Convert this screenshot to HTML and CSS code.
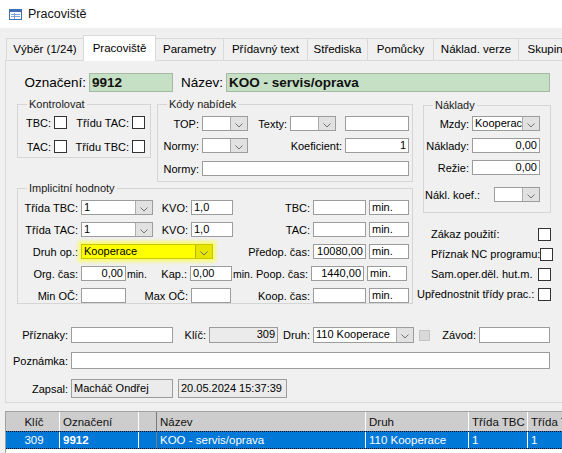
FILE: index.html
```html
<!DOCTYPE html>
<html>
<head>
<meta charset="utf-8">
<link rel="stylesheet" href="styles.css">
</head>
<body>
<div class="titlebar">
    <svg class="ticon" width="13" height="11" viewBox="0 0 13 11">
        <rect x="0.5" y="0.5" width="12" height="10" fill="#fff" stroke="#3f6fb5"/>
        <rect x="1" y="1" width="11" height="2" fill="#3f6fb5"/>
        <line x1="2" y1="5.5" x2="11" y2="5.5" stroke="#7fa2d6"/>
        <line x1="2" y1="7.5" x2="11" y2="7.5" stroke="#7fa2d6"/>
        <line x1="5.5" y1="4" x2="5.5" y2="10" stroke="#7fa2d6"/>
    </svg>
    <span>Pracoviště</span>
</div>

<div class="tabs">
    <div class="tab t1">Výběr (1/24)</div>
    <div class="tab t2 on">Pracoviště</div>
    <div class="tab t3">Parametry</div>
    <div class="tab t4">Přídavný text</div>
    <div class="tab t5">Střediska</div>
    <div class="tab t6">Pomůcky</div>
    <div class="tab t7">Náklad. verze</div>
    <div class="tab t8">Skupiny</div>
</div>

<div class="page">
    <div class="orow">
        <span class="l w83">Označení:</span>
        <div class="tb green w84">9912</div>
        <span class="l w53">Název:</span>
        <div class="tb green w324">KOO - servis/oprava</div>
    </div>

    <div class="main">
        <div class="leftcol">
            <div class="toprow">
                <div class="grp kontrol">
                    <div class="gt">Kontrolovat</div>
                    <div class="gr">
                        <span class="l w36">TBC:</span><div class="ck"></div>
                        <span class="l w65">Třídu TAC:</span><div class="ck"></div>
                    </div>
                    <div class="gr">
                        <span class="l w36">TAC:</span><div class="ck"></div>
                        <span class="l w65">Třídu TBC:</span><div class="ck"></div>
                    </div>
                </div>

                <div class="grp kody">
                    <div class="gt">Kódy nabídek</div>
                    <div class="gr">
                        <span class="l w44">TOP:</span>
                        <div class="cmb w46"><span class="cv"></span><span class="ca"><svg width="8" height="5"><polyline points="0.5,0.5 4,4 7.5,0.5" fill="none" stroke="#707070"/></svg></span></div>
                        <span class="l w42">Texty:</span>
                        <div class="cmb w46"><span class="cv"></span><span class="ca"><svg width="8" height="5"><polyline points="0.5,0.5 4,4 7.5,0.5" fill="none" stroke="#707070"/></svg></span></div>
                        <div class="tb w64 ml9"></div>
                    </div>
                    <div class="gr">
                        <span class="l w44">Normy:</span>
                        <div class="cmb w46"><span class="cv"></span><span class="ca"><svg width="8" height="5"><polyline points="0.5,0.5 4,4 7.5,0.5" fill="none" stroke="#707070"/></svg></span></div>
                        <span class="l w97">Koeficient:</span>
                        <div class="tb w64 r">1</div>
                    </div>
                    <div class="gr">
                        <span class="l w44">Normy:</span>
                        <div class="tb w207"></div>
                    </div>
                </div>
            </div>

            <div class="grp implicit">
                <div class="gt">Implicitní hodnoty</div>
                <div class="gr">
                    <span class="l w63">Třída TBC:</span>
                    <div class="cmb w72"><span class="cv">1</span><span class="ca"><svg width="8" height="5"><polyline points="0.5,0.5 4,4 7.5,0.5" fill="none" stroke="#707070"/></svg></span></div>
                    <span class="l w38">KVO:</span>
                    <div class="tb w42">1,0</div>
                    <span class="l w80">TBC:</span>
                    <div class="tb w53"></div>
                    <div class="tb w40 ml3">min.</div>
                </div>
                <div class="gr">
                    <span class="l w63">Třída TAC:</span>
                    <div class="cmb w72"><span class="cv">1</span><span class="ca"><svg width="8" height="5"><polyline points="0.5,0.5 4,4 7.5,0.5" fill="none" stroke="#707070"/></svg></span></div>
                    <span class="l w38">KVO:</span>
                    <div class="tb w42">1,0</div>
                    <span class="l w80">TAC:</span>
                    <div class="tb w53"></div>
                    <div class="tb w40 ml3">min.</div>
                </div>
                <div class="gr">
                    <span class="l w63">Druh op.:</span>
                    <div class="cmb hl w132"><span class="cv">Kooperace</span><span class="ca"><svg width="8" height="5"><polyline points="0.5,0.5 4,4 7.5,0.5" fill="none" stroke="#707070"/></svg></span></div>
                    <span class="l w100">Předop. čas:</span>
                    <div class="tb w53 r">10080,00</div>
                    <div class="tb w40 ml3">min.</div>
                </div>
                <div class="gr">
                    <span class="l w63">Org. čas:</span>
                    <div class="tb w45 r">0,00</div>
                    <span class="unit">min.</span>
                    <span class="l w42">Kap.:</span>
                    <div class="tb w42">0,00</div>
                    <span class="unit">min.</span>
                    <span class="l w57">Poop. čas:</span>
                    <div class="tb w53 r">1440,00</div>
                    <div class="tb w40 ml3">min.</div>
                </div>
                <div class="gr">
                    <span class="l w63">Min OČ:</span>
                    <div class="tb w45"></div>
                    <span class="l w65">Max OČ:</span>
                    <div class="tb w40"></div>
                    <span class="l w82">Koop. čas:</span>
                    <div class="tb w53"></div>
                    <div class="tb w40 ml3">min.</div>
                </div>
            </div>
        </div>

        <div class="rightcol">
            <div class="grp naklady">
                <div class="gt">Náklady</div>
                <div class="gr">
                    <span class="l w48">Mzdy:</span>
                    <div class="cmb w68"><span class="cv">Kooperace</span><span class="ca"><svg width="8" height="5"><polyline points="0.5,0.5 4,4 7.5,0.5" fill="none" stroke="#707070"/></svg></span></div>
                </div>
                <div class="gr">
                    <span class="l w48">Náklady:</span>
                    <div class="tb w68 r">0,00</div>
                </div>
                <div class="gr">
                    <span class="l w48">Režie:</span>
                    <div class="tb w68 r">0,00</div>
                </div>
                <div class="gr">
                    <span class="l left w70">Nákl. koef.:</span>
                    <div class="cmb w46"><span class="cv"></span><span class="ca"><svg width="8" height="5"><polyline points="0.5,0.5 4,4 7.5,0.5" fill="none" stroke="#707070"/></svg></span></div>
                </div>
            </div>

            <div class="checks">
                <div class="chk"><span>Zákaz použití:</span><div class="ck"></div></div>
                <div class="chk"><span>Příznak NC programu:</span><div class="ck"></div></div>
                <div class="chk"><span>Sam.oper.děl. hut.m.</span><div class="ck"></div></div>
                <div class="chk wide"><span>Upřednostnit třídy prac.:</span><div class="ck"></div></div>
            </div>
        </div>
    </div>

    <div class="bottom">
        <div class="brow b1">
            <span class="l w65">Příznaky:</span>
            <div class="tb w102"></div>
            <span class="l w36">Klíč:</span>
            <div class="tb ro w69 r">309</div>
            <span class="l w35">Druh:</span>
            <div class="cmb w101"><span class="cv">110 Kooperace</span><span class="ca"><svg width="8" height="5"><polyline points="0.5,0.5 4,4 7.5,0.5" fill="none" stroke="#707070"/></svg></span></div>
            <div class="ckoff"></div>
            <span class="l w49">Závod:</span>
            <div class="tb w71"></div>
        </div>
        <div class="brow b2">
            <span class="l w65">Poznámka:</span>
            <div class="tb w479"></div>
        </div>
        <div class="brow b3">
            <span class="l w65">Zapsal:</span>
            <div class="tb ro w102">Macháč Ondřej</div>
            <div class="tb ro w109 ml5">20.05.2024 15:37:39</div>
        </div>
    </div>
</div>

<div class="grid">
    <div class="gh">
        <div class="c k">Klíč</div>
        <div class="c o">Označení</div>
        <div class="c x"></div>
        <div class="c n">Název</div>
        <div class="c d">Druh</div>
        <div class="c t">Třída TBC</div>
        <div class="c t2c">Třída TAC</div>
    </div>
    <div class="gsel">
        <div class="c k">309</div>
        <div class="c o b">9912</div>
        <div class="c x"></div>
        <div class="c n">KOO - servis/oprava</div>
        <div class="c d">110 Kooperace</div>
        <div class="c t">1</div>
        <div class="c t2c">1</div>
    </div>
</div>
</body>
</html>
```

FILE: styles.css
```css
* {
    box-sizing: border-box;
}

body {
    margin: 0;
    width: 562px;
    height: 453px;
    overflow: hidden;
    background: #f0f0f0;
    font-family: "Liberation Sans", Arial, sans-serif;
    font-size: 11px;
    color: #000;
}

/* window title */
.titlebar {
    height: 28px;
    background: #fff;
    display: flex;
    align-items: center;
    padding-left: 9px;
    font-size: 12.5px;
    color: #111;
}
.ticon {
    margin-right: 6px;
}

/* tab strip */
.tabs {
    display: flex;
    align-items: flex-end;
    height: 25px;
    margin-top: 7px;
    padding-left: 6px;
    font-size: 11.5px;
}
.tab {
    flex: none;
    height: 22px;
    line-height: 21px;
    text-align: center;
    white-space: nowrap;
    overflow: hidden;
    background: #f0f0f0;
    border: 1px solid #d9d9d9;
    border-bottom: none;
    margin-right: -1px;
}
.tab.on {
    height: 26px;
    line-height: 24px;
    margin-bottom: -1px;
    background: #fff;
    position: relative;
    z-index: 1;
}
.t1 { width: 78px; }
.t2 { width: 73px; }
.t3 { width: 69px; }
.t4 { width: 85px; }
.t5 { width: 61px; }
.t6 { width: 67px; }
.t7 { width: 86px; }
.t8 { width: 60px; }

/* form page */
.page {
    margin-left: 5px;
    width: 600px;
    height: 343px;
    border: 1px solid #d9d9d9;
    padding-top: 12px;
}

.orow {
    display: flex;
    align-items: center;
    height: 19px;
    font-size: 13.5px;
}

.main {
    display: flex;
    margin-top: 12px;
}
.leftcol {
    margin-left: 11px;
    width: 396px;
}
.toprow {
    display: flex;
    align-items: flex-start;
}
.rightcol {
    margin-left: 4px;
    width: 135px;
}

/* group boxes */
.grp {
    flex: none;
    border: 1px solid #d5d5d5;
}
.gt {
    width: max-content;
    height: 13px;
    line-height: 13px;
    margin: -7px 0 0 9px;
    padding: 0 2px;
    background: #f0f0f0;
    color: #1a1a1a;
}
.gr {
    display: flex;
    align-items: center;
    height: 15px;
    margin-top: 7px;
}
.gt + .gr {
    margin-top: 5px;
}

.kontrol {
    width: 134px;
    height: 54px;
}
.kontrol .gr {
    height: 13px;
    margin-top: 11px;
}
.kontrol .gt + .gr {
    margin-top: 5px;
}

.kody {
    width: 256px;
    height: 78px;
    margin-left: 6px;
}
.kody .gr:last-child {
    margin-top: 8px;
}

.implicit {
    width: 396px;
    height: 116px;
    margin-top: 6px;
}

.naklady {
    width: 128px;
    height: 108px;
    margin: 1px 0 0 6px;
}
.naklady .gt + .gr {
    margin-top: 4px;
}
.naklady .gr:last-child {
    margin-top: 12px;
}

.checks {
    margin-top: 14px;
}
.chk {
    display: flex;
    align-items: center;
    height: 14px;
    margin-bottom: 6px;
    padding-left: 14px;
}
.chk span {
    flex: 1;
    white-space: nowrap;
}
.chk.wide {
    padding-left: 0;
}
.chk .ck {
    margin-right: 1px;
}

/* bottom fields */
.bottom {
    margin-top: 20px;
}
.brow {
    display: flex;
    align-items: center;
}
.b1 { height: 16px; }
.b1 .tb, .b1 .cmb { height: 16px; }
.b2 { height: 17px; margin-top: 9px; }
.b2 .tb { height: 17px; }
.b3 { height: 19px; margin-top: 10px; }
.b3 .tb { height: 19px; line-height: 17px; }

/* controls */
.l {
    flex: none;
    text-align: right;
    padding-right: 3px;
    white-space: nowrap;
}
.l.left {
    text-align: left;
    padding-left: 1px;
}
.unit {
    flex: none;
    width: 22px;
    padding-left: 1px;
    font-size: 10.5px;
}

.tb {
    flex: none;
    height: 15px;
    line-height: 13px;
    padding: 0 2px;
    background: #fff;
    border: 1px solid #9c9c9c;
    white-space: nowrap;
    overflow: hidden;
}
.tb.r {
    text-align: right;
}
.tb.ro {
    background: #ebebeb;
}
.tb.green {
    height: 19px;
    line-height: 17px;
    background: #c5e0c4;
    border-color: #a6b9a5;
    font-weight: bold;
    font-size: 13.5px;
    color: #111;
}

.cmb {
    flex: none;
    display: flex;
    height: 15px;
    background: #fff;
    border: 1px solid #9c9c9c;
}
.cv {
    flex: 1;
    padding: 0 2px;
    line-height: 13px;
    white-space: nowrap;
    overflow: hidden;
}
.ca {
    flex: none;
    width: 17px;
    display: flex;
    align-items: center;
    justify-content: center;
    padding-top: 3px;
    background: #e1e1e1;
    border-left: 1px solid #adadad;
}
.cmb.hl {
    background: #ffff00;
    border-color: #c8c800;
    box-shadow: 0 0 3px 3px rgba(255, 255, 60, 0.65);
}
.cmb.hl .ca {
    background: #e6e600;
    border-left-color: #b5b500;
}

.ck {
    flex: none;
    width: 13px;
    height: 13px;
    background: #fff;
    border: 1px solid #333;
}
.ckoff {
    flex: none;
    width: 11px;
    height: 11px;
    margin-left: 5px;
    background: #d9d9d9;
    border: 1px solid #c4c4c4;
}

.ml3 { margin-left: 3px; }
.ml5 { margin-left: 5px; }
.ml9 { margin-left: 9px; }

.w35 { width: 35px; }
.w36 { width: 36px; }
.w38 { width: 38px; }
.w40 { width: 40px; }
.w42 { width: 42px; }
.w44 { width: 44px; }
.w45 { width: 45px; }
.w46 { width: 46px; }
.w48 { width: 48px; }
.w49 { width: 49px; }
.w53 { width: 53px; }
.w57 { width: 57px; }
.w63 { width: 63px; }
.w64 { width: 64px; }
.w65 { width: 65px; }
.w68 { width: 68px; }
.w69 { width: 69px; }
.w70 { width: 70px; }
.w71 { width: 71px; }
.w72 { width: 72px; }
.w80 { width: 80px; }
.w82 { width: 82px; }
.w83 { width: 83px; }
.w84 { width: 84px; }
.w97 { width: 97px; }
.w100 { width: 100px; }
.w101 { width: 101px; }
.w102 { width: 102px; }
.w109 { width: 109px; }
.w132 { width: 132px; }
.w207 { width: 207px; }
.w324 { width: 324px; }
.w479 { width: 479px; }

/* datasheet */
.grid {
    margin: 8px 0 0 5px;
    width: 600px;
    height: 50px;
    background: #fff;
    border-left: 1px solid #a0a0a0;
    border-top: 1px solid #a0a0a0;
    font-size: 11.5px;
}
.gh, .gsel {
    display: flex;
}
.gh {
    height: 19px;
    background: #cdcdcd;
    color: #111;
}
.gsel {
    height: 18px;
    background: #0078d7;
    color: #fff;
    border-top: 1px dotted #000;
    border-bottom: 1px dotted #000;
}
.c {
    flex: none;
    padding-left: 3px;
    white-space: nowrap;
    overflow: hidden;
    border-right: 1px solid #fff;
    display: flex;
    align-items: center;
}
.c.k { width: 54px; justify-content: center; }
.c.o { width: 79px; }
.c.x { width: 18px; border-right: 1px solid #7a7a7a; }
.c.n { width: 209px; }
.c.d { width: 103px; }
.c.t { width: 59px; }
.c.t2c { width: 70px; }
.c.b { font-weight: bold; }
```
